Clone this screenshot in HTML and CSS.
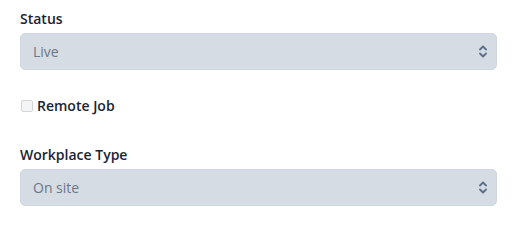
FILE: index.html
```html
<!DOCTYPE html>
<html lang="en">
<head>
	<title>Job settings</title>
	<meta charset="utf-8" />
	<meta name="viewport" content="width=device-width, initial-scale=1">
	<link rel="stylesheet" href="styles.css">
</head>
<body>
	<div class="container">
		<div class="field">
			<label for="status">Status</label>
			<div class="select-wrap">
				<select id="status" name="status">
					<option>Live</option>
					<option>Draft</option>
					<option>Closed</option>
				</select>
				<svg class="arrows" width="8" height="13" viewBox="0 0 8 13">
					<path d="M1 4.5 L4 1.5 L7 4.5 M1 8.5 L4 11.5 L7 8.5" fill="none" stroke="#5b6f88" stroke-width="1.8" stroke-linecap="round" stroke-linejoin="round"/>
				</svg>
			</div>
		</div>
		<div class="check">
			<input type="checkbox" id="remote" name="remote">
			<label for="remote">Remote Job</label>
		</div>
		<div class="field">
			<label for="workplace">Workplace Type</label>
			<div class="select-wrap">
				<select id="workplace" name="workplace">
					<option>On site</option>
					<option>Hybrid</option>
					<option>Remote</option>
				</select>
				<svg class="arrows" width="8" height="13" viewBox="0 0 8 13">
					<path d="M1 4.5 L4 1.5 L7 4.5 M1 8.5 L4 11.5 L7 8.5" fill="none" stroke="#5b6f88" stroke-width="1.8" stroke-linecap="round" stroke-linejoin="round"/>
				</svg>
			</div>
		</div>
	</div>
</body>
</html>
```

FILE: styles.css
```css
* {
	box-sizing: border-box
}

body,
html {
	margin: 0;
	background-color: white;
	font-family: "Open Sans", Arial, sans-serif;
}

div.container {
	padding: 9px 21px 0 20px;
}

.field label {
	display: block;
	font-size: 14px;
	font-weight: 600;
	line-height: 20px;
	color: #1a2433;
	margin-bottom: 4px;
}

/* The select box with the custom up/down arrows */
.select-wrap {
	position: relative;
}

.select-wrap select {
	-webkit-appearance: none;
	appearance: none;
	width: 100%;
	height: 37px;
	padding: 0 30px 0 12px;
	border: 1px solid #d0d7e0;
	border-radius: 5px;
	background-color: #d6dce4;
	color: #6b7787;
	font-family: "Open Sans", Arial, sans-serif;
	font-size: 14px;
}

.select-wrap .arrows {
	position: absolute;
	right: 10px;
	top: 12px;
	pointer-events: none;
}

.check {
	display: flex;
	align-items: center;
	margin: 26px 0 29px 0;
	height: 20px;
}

/* Light grey box instead of the default checkbox */
.check input {
	-webkit-appearance: none;
	appearance: none;
	margin: 0 4px 0 1px;
	width: 12px;
	height: 12px;
	border: 1px solid #d4d6d9;
	border-radius: 2px;
	background-color: #f4f5f6;
}

.check input:checked {
	background-color: #5b6f88;
	border-color: #5b6f88;
}

.check label {
	font-size: 14px;
	font-weight: 600;
	line-height: 20px;
	color: #1a2433;
}
```
